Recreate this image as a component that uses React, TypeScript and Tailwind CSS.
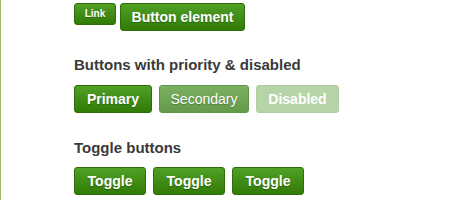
import React from "react";

const base =
    "rounded-[3px] border text-white leading-none [text-shadow:0_1px_1px_rgba(0,0,0,0.25)]";
const green =
    "bg-gradient-to-b from-[#51a026] to-[#317a05] border-[#2d6e06] font-bold";

const Heading: React.FC<{ children: React.ReactNode }> = ({ children }) => (
    <h3 className="text-[15px] font-bold text-[#3a3a3a] leading-[17px]">{children}</h3>
);

export default function App() {
    return (
        <div
            className="w-[450px] h-[200px] bg-white border-l border-[#9dbb5f] overflow-hidden"
            style={{ fontFamily: '"Liberation Sans", Arial, sans-serif' }}
        >
            <div className="pl-[73px] pt-[3px] flex flex-col">
                <div className="flex items-start gap-[4px]">
                    <a className={`${base} ${green} text-[10px] h-[22px] w-[42px] flex items-center justify-center`}>
                        Link
                    </a>
                    <button className={`${base} ${green} text-[14px] h-[28px] w-[125px]`}>
                        Button element
                    </button>
                </div>

                <div className="mt-[25px]">
                    <Heading>Buttons with priority &amp; disabled</Heading>
                </div>
                <div className="flex gap-[7px] mt-[12px]">
                    <button className={`${base} ${green} text-[14px] h-[28px] w-[78px]`}>
                        Primary
                    </button>
                    <button className={`${base} bg-gradient-to-b from-[#7bb062] to-[#649a4a] border-[#5f9547] text-[#f2f5ec] text-[14px] h-[28px] w-[90px]`}>
                        Secondary
                    </button>
                    <button className={`${base} bg-[#b6d4a7] border-[#b0cfa1] text-[#f6faf2] font-bold text-[14px] h-[28px] w-[83px] [text-shadow:none]`}>
                        Disabled
                    </button>
                </div>

                <div className="mt-[26px]">
                    <Heading>Toggle buttons</Heading>
                </div>
                <div className="flex gap-[7px] mt-[11px]">
                    {[0, 1, 2].map((i) => (
                        <button key={i} className={`${base} ${green} text-[14px] h-[28px] w-[72px]`}>
                            Toggle
                        </button>
                    ))}
                </div>
            </div>
        </div>
    );
}
